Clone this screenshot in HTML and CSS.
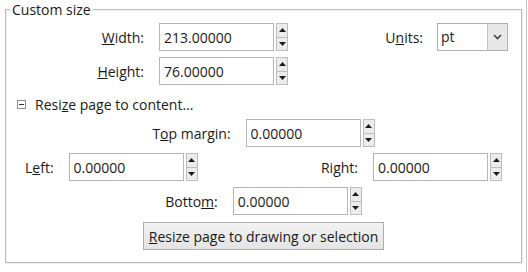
FILE: index.html
```html
<!DOCTYPE html>
<html lang="en">
<head>
    <meta charset="UTF-8">
    <meta name="viewport" content="width=device-width, initial-scale=1.0">
    <title>Custom size</title>
    <link rel="stylesheet" href="styles.css">
</head>
<body>
    <div class="window">
        <fieldset class="frame">
            <legend class="frame-title">Custom size</legend>

            <div class="row">
                <label class="label size-label"><u>W</u>idth:</label>
                <div class="spinfield">
                    <input class="entry" type="text" value="213.00000" readonly>
                    <div class="spin">
                        <span class="spin-btn"><svg width="7" height="4" viewBox="0 0 7 4"><path d="M3.5 0 L7 4 L0 4 Z" fill="#1b1b1b"/></svg></span>
                        <span class="spin-btn"><svg width="7" height="4" viewBox="0 0 7 4"><path d="M0 0 L7 0 L3.5 4 Z" fill="#1b1b1b"/></svg></span>
                    </div>
                </div>
                <div class="units">
                    <label class="label">U<u>n</u>its:</label>
                    <div class="combo">
                        <span class="combo-text">pt</span>
                        <span class="combo-btn"><svg width="9" height="6" viewBox="0 0 9 6"><path d="M1 1 L4.5 4.5 L8 1" fill="none" stroke="#444" stroke-width="1.6"/></svg></span>
                    </div>
                </div>
            </div>

            <div class="row row-gap">
                <label class="label size-label"><u>H</u>eight:</label>
                <div class="spinfield">
                    <input class="entry" type="text" value="76.00000" readonly>
                    <div class="spin">
                        <span class="spin-btn"><svg width="7" height="4" viewBox="0 0 7 4"><path d="M3.5 0 L7 4 L0 4 Z" fill="#1b1b1b"/></svg></span>
                        <span class="spin-btn"><svg width="7" height="4" viewBox="0 0 7 4"><path d="M0 0 L7 0 L3.5 4 Z" fill="#1b1b1b"/></svg></span>
                    </div>
                </div>
            </div>

            <div class="expander">
                <svg class="expander-icon" width="9" height="9" viewBox="0 0 9 9">
                    <rect x="0.5" y="0.5" width="8" height="8" fill="#fff" stroke="#8c8c8c"/>
                    <path d="M2 4.5 H7" stroke="#333" stroke-width="1"/>
                </svg>
                <span>Resi<u>z</u>e page to content...</span>
            </div>

            <div class="row center-row margin-top">
                <label class="label">T<u>o</u>p margin:</label>
                <div class="spinfield">
                    <input class="entry" type="text" value="0.00000" readonly>
                    <div class="spin">
                        <span class="spin-btn"><svg width="7" height="4" viewBox="0 0 7 4"><path d="M3.5 0 L7 4 L0 4 Z" fill="#1b1b1b"/></svg></span>
                        <span class="spin-btn"><svg width="7" height="4" viewBox="0 0 7 4"><path d="M0 0 L7 0 L3.5 4 Z" fill="#1b1b1b"/></svg></span>
                    </div>
                </div>
            </div>

            <div class="row side-row row-gap">
                <div class="group">
                    <label class="label">L<u>e</u>ft:</label>
                    <div class="spinfield">
                        <input class="entry" type="text" value="0.00000" readonly>
                        <div class="spin">
                            <span class="spin-btn"><svg width="7" height="4" viewBox="0 0 7 4"><path d="M3.5 0 L7 4 L0 4 Z" fill="#1b1b1b"/></svg></span>
                            <span class="spin-btn"><svg width="7" height="4" viewBox="0 0 7 4"><path d="M0 0 L7 0 L3.5 4 Z" fill="#1b1b1b"/></svg></span>
                        </div>
                    </div>
                </div>
                <div class="group">
                    <label class="label">Ri<u>g</u>ht:</label>
                    <div class="spinfield">
                        <input class="entry" type="text" value="0.00000" readonly>
                        <div class="spin">
                            <span class="spin-btn"><svg width="7" height="4" viewBox="0 0 7 4"><path d="M3.5 0 L7 4 L0 4 Z" fill="#1b1b1b"/></svg></span>
                            <span class="spin-btn"><svg width="7" height="4" viewBox="0 0 7 4"><path d="M0 0 L7 0 L3.5 4 Z" fill="#1b1b1b"/></svg></span>
                        </div>
                    </div>
                </div>
            </div>

            <div class="row center-row row-gap">
                <label class="label">Botto<u>m</u>:</label>
                <div class="spinfield">
                    <input class="entry" type="text" value="0.00000" readonly>
                    <div class="spin">
                        <span class="spin-btn"><svg width="7" height="4" viewBox="0 0 7 4"><path d="M3.5 0 L7 4 L0 4 Z" fill="#1b1b1b"/></svg></span>
                        <span class="spin-btn"><svg width="7" height="4" viewBox="0 0 7 4"><path d="M0 0 L7 0 L3.5 4 Z" fill="#1b1b1b"/></svg></span>
                    </div>
                </div>
            </div>

            <div class="row center-row button-row">
                <button class="button"><u>R</u>esize page to drawing or selection</button>
            </div>
        </fieldset>
    </div>
</body>
</html>
```

FILE: styles.css
```css
body {
    margin: 0;
    padding: 0;
    background-color: #fff;
    font-family: "Open Sans", "Noto Sans", sans-serif;
    font-size: 14px;
    color: #1a1a1a;
}

.window {
    width: 527px;
    height: 272px;
    box-sizing: border-box;
    border-right: 1px solid #c4c4c4;
    padding-left: 5px;
}

.frame {
    box-sizing: border-box;
    width: 517px;
    height: 263px;
    margin: 0;
    padding: 4px 0 0 0;
    border: 1px solid #bcbcbc;
    box-shadow: inset 1px 1px 0 #f4f4f4, 1px 1px 0 #ececec;
}

.frame-title {
    margin-left: 4px;
    padding: 0 2px;
    line-height: 19px;
    height: 19px;
}

.row {
    display: flex;
    align-items: center;
    height: 28px;
}

.row-gap {
    margin-top: 6px;
}

.label {
    line-height: 19px;
    margin-right: 15px;
    white-space: nowrap;
}

.size-label {
    width: 138px;
    text-align: right;
}

.spinfield {
    display: flex;
    gap: 2px;
    height: 28px;
}

.entry {
    box-sizing: border-box;
    width: 115px;
    height: 28px;
    margin: 0;
    padding: 0 4px;
    border: 1px solid #b5b5b5;
    font-family: inherit;
    font-size: 14px;
    color: #1a1a1a;
    background-color: #fff;
    outline: none;
}

.spin {
    display: flex;
    flex-direction: column;
    width: 12px;
}

.spin-btn {
    flex: 1;
    display: flex;
    align-items: center;
    justify-content: center;
    box-sizing: border-box;
    border: 1px solid #bdbdbd;
    background-color: #ececec;
}

.spin-btn + .spin-btn {
    border-top: none;
}

.units {
    display: flex;
    align-items: center;
    margin-left: auto;
    margin-right: 13px;
}

.units .label {
    margin-right: 14px;
}

.combo {
    display: flex;
    box-sizing: border-box;
    width: 71px;
    height: 28px;
    border: 1px solid #b0b0b0;
    background-color: #fff;
}

.combo-text {
    flex: 1;
    line-height: 26px;
    padding-left: 3px;
}

.combo-btn {
    display: flex;
    align-items: center;
    justify-content: center;
    width: 19px;
    border-left: 1px solid #c6c6c6;
    background-color: #e8e8e8;
}

.expander {
    display: flex;
    align-items: center;
    height: 19px;
    margin-top: 10px;
    padding-left: 11px;
    line-height: 19px;
}

.expander-icon {
    margin-right: 9px;
}

.margin-top {
    margin-top: 5px;
}

.center-row {
    justify-content: center;
}

.side-row {
    justify-content: space-between;
    padding: 0 19px;
}

.group {
    display: flex;
    align-items: center;
}

.button-row {
    margin-top: 7px;
}

.button {
    height: 28px;
    padding: 0 5px;
    font-family: inherit;
    font-size: 14px;
    color: #1a1a1a;
    border: 1px solid #adadad;
    border-radius: 0;
    background: linear-gradient(#f2f2f2, #e4e4e4);
    cursor: pointer;
}
```
